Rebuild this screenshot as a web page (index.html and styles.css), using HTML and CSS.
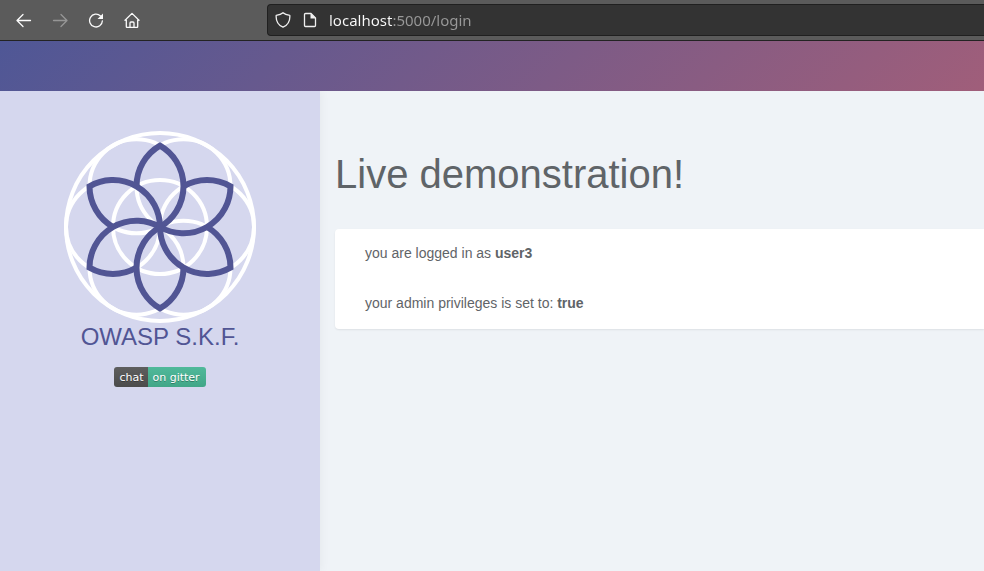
FILE: index.html
```html
<!DOCTYPE html>
<html lang="en">
<head>
<meta charset="utf-8">
<meta name="viewport" content="width=device-width, initial-scale=1">
<title>Live demonstration!</title>
<link rel="stylesheet" href="styles.css">
</head>
<body>
<div class="browser">
  <nav class="toolbar" aria-label="Browser">
    <button class="tool" type="button" aria-label="Back">
      <svg class="icon" viewBox="0 0 16 16"><path d="M14.500 8.500H1.500M7 2.500l-6 6 6 6"/></svg>
    </button>
    <button class="tool" type="button" aria-label="Forward" disabled>
      <svg class="icon" viewBox="0 0 16 16"><path d="M1.500 8.500h13M9 2.500l6 6-6 6"/></svg>
    </button>
    <button class="tool" type="button" aria-label="Reload">
      <svg class="icon" viewBox="0 0 16 16"><path d="M12.500 4A6.400 6.400 0 1 0 14.400 8.800"/><path class="solid" d="M15 1.500V7H9.500z"/></svg>
    </button>
    <button class="tool" type="button" aria-label="Home">
      <svg class="icon" viewBox="0 0 16 16"><path d="M1 8.200L8 1.400l7 6.800M2.300 7v7.500a1 1 0 0 0 1 1h9.400a1 1 0 0 0 1-1V7M6 15v-4a1 1 0 0 1 1-1h2a1 1 0 0 1 1 1v4"/></svg>
    </button>
    <div class="address">
      <svg class="icon" viewBox="0 0 16 16"><path d="M8 .8C6.500 2.300 4 3.100 1.200 3.300.8 8.500 3 13 8 15.200c5-2.200 7.200-6.700 6.800-11.900C12 3.100 9.500 2.300 8 .8z"/></svg>
      <svg class="icon" viewBox="0 0 16 16"><path d="M9 1.500H3.500a1 1 0 0 0-1 1v11a1 1 0 0 0 1 1h9a1 1 0 0 0 1-1V6z"/><path class="solid" d="M8.500 1v5.500H14z"/></svg>
      <input class="url" type="text" aria-label="Address" value="localhost:5000/login">
    </div>
  </nav>
</div>
<header class="banner"></header>
<div class="layout">
  <aside class="sidebar">
    <svg class="logo" viewBox="-96 -96 192 192" role="img" aria-label="OWASP S.K.F. logo">
      <defs>
        <path id="petal" d="M-23.500-40.700A47 47 0 0 1 0-81.400A47 47 0 0 1 0 0"/>
      </defs>
      <g class="rings">
        <circle r="94"/>
        <circle r="47"/>
        <circle cx="47" r="47"/>
        <circle cx="-47" r="47"/>
        <circle cx="23.500" cy="-40.700" r="47"/>
        <circle cx="-23.500" cy="-40.700" r="47"/>
        <circle cx="23.500" cy="40.700" r="47"/>
        <circle cx="-23.500" cy="40.700" r="47"/>
      </g>
      <g class="petals">
        <use href="#petal"/>
        <use href="#petal" transform="rotate(60)"/>
        <use href="#petal" transform="rotate(120)"/>
        <use href="#petal" transform="rotate(180)"/>
        <use href="#petal" transform="rotate(240)"/>
        <use href="#petal" transform="rotate(300)"/>
      </g>
    </svg>
    <div class="brand">OWASP S.K.F.</div>
    <a class="badge" href="#chat"><span class="badge-name">chat</span><span class="badge-place">on gitter</span></a>
  </aside>
  <main class="content">
    <h1 class="title">Live demonstration!</h1>
    <section class="card">
      <p class="line">you are logged in as <strong>user3</strong></p>
      <p class="line">your admin privileges is set to: <strong>true</strong></p>
    </section>
  </main>
</div>
</body>
</html>
```
FILE: styles.css
```css
* {
  box-sizing: border-box;
}

body {
  display: flex;
  flex-direction: column;
  min-height: 100vh;
  margin: 0;
  overflow-x: hidden;
  background: #eff3f7;
  color: #5f6468;
  font: 14px/20px "Liberation Sans", Arial, sans-serif;
}

.browser {
  padding: 4px 0 4px 6px;
  border-bottom: 1px solid #232323;
  background: #5b5b5b;
}

.toolbar {
  display: flex;
  align-items: center;
}

.tool {
  display: flex;
  align-items: center;
  justify-content: center;
  width: 36px;
  height: 32px;
  padding: 0;
  border: 0;
  background: none;
  color: #fbfbfb;
}

.tool:disabled {
  color: #969696;
}

.icon {
  flex: none;
  width: 16px;
  height: 16px;
  fill: none;
  stroke: currentColor;
  stroke-width: 1.3;
  stroke-linecap: round;
  stroke-linejoin: round;
}

.icon .solid {
  fill: currentColor;
  stroke: none;
}

.address {
  display: flex;
  flex: 1;
  align-items: center;
  gap: 11px;
  height: 32px;
  margin-left: 117px;
  padding-left: 7px;
  border: 1px solid #202020;
  border-right: 0;
  border-radius: 4px 0 0 4px;
  background: #333;
  color: #f0f0f0;
}

/* The host is bright, the port and path after it are dimmed. */
.url {
  flex: 1;
  min-width: 0;
  height: 28px;
  padding: 0;
  border: 0;
  outline: 0;
  background: linear-gradient(to right, #fbfbfb 64px, #999 64px);
  background-clip: text;
  color: transparent;
  caret-color: #fbfbfb;
  font: 15px/20px "Noto Sans", sans-serif;
}

.banner {
  height: 50px;
  background: linear-gradient(135deg, #4f5796, #a05e7a);
}

.layout {
  display: flex;
  flex: 1;
}

.sidebar {
  display: flex;
  flex: none;
  flex-direction: column;
  align-items: center;
  width: 320px;
  padding-top: 40px;
  background: #d5d7ee;
  box-shadow: 0 0 10px rgba(0, 0, 0, 0.06);
  clip-path: inset(0 -20px 0 0);
}

.logo {
  width: 192px;
  height: 192px;
  fill: none;
}

.rings {
  stroke: #fff;
  stroke-width: 4;
}

.petals {
  stroke: #515594;
  stroke-width: 6;
}

.brand {
  color: #515594;
  font-size: 24px;
  line-height: 28px;
}

.badge {
  display: flex;
  height: 20px;
  margin-top: 16px;
  overflow: hidden;
  border-radius: 3px;
  color: #fff;
  font: 11px/22px "DejaVu Sans", Verdana, sans-serif;
  text-decoration: none;
  text-shadow: 0 1px 0 rgba(1, 1, 1, 0.3);
}

.badge-name {
  padding: 0 5px;
  background: linear-gradient(#5e5e5e, #4b4b4b);
}

.badge-place {
  padding: 0 6px 0 4px;
  background: linear-gradient(#50b99a, #41a687);
}

.content {
  flex: 1;
  min-width: 0;
  padding: 60px 0 0 15px;
}

.title {
  margin: 0;
  font-size: 40px;
  font-weight: 400;
  line-height: 46px;
}

.card {
  margin-top: 32px;
  padding: 0 30px 2px;
  border-radius: 4px 0 0 4px;
  background: #fff;
  box-shadow: 0 1px 2px rgba(0, 0, 0, 0.08);
}

.line {
  margin: 0;
  line-height: 48px;
}

.line + .line {
  margin-top: 2px;
}
```
